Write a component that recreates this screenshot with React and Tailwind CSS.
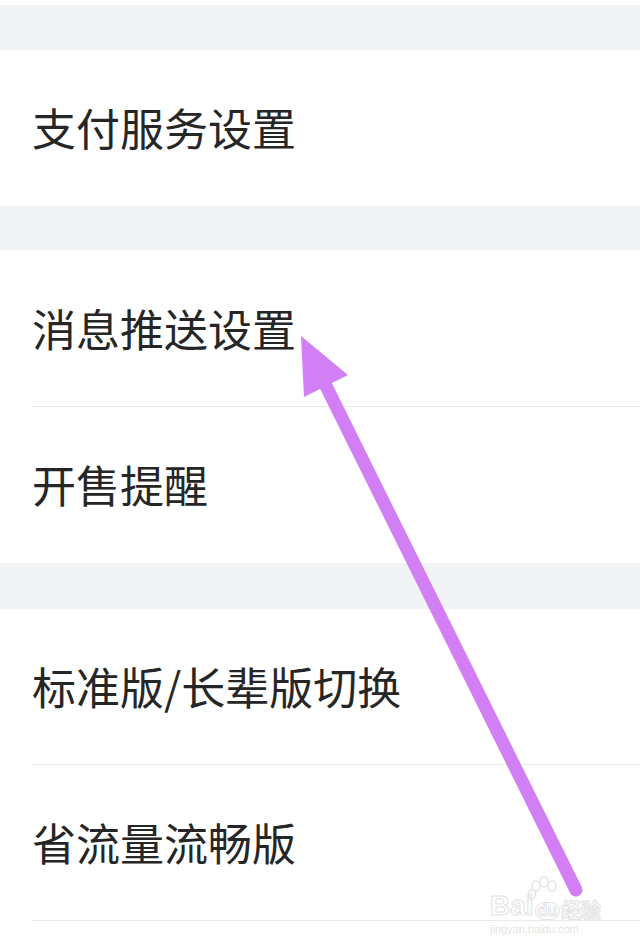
import React from "react";

const font = { fontFamily: '"Noto Sans CJK SC", "Noto Sans", sans-serif' };

function Row({ label, divider, tall }) {
  return (
    <div className={`relative ${tall ? "h-[157px]" : "h-[156px]"} flex items-center pl-[32px] bg-white`}>
      <span className="text-[44px] leading-none text-[#262626] -mt-[2px]">{label}</span>
      {divider && <div className="absolute bottom-0 left-[32px] right-0 h-px bg-[#ebebeb]" />}
    </div>
  );
}

export default function App() {
  return (
    <div className="relative w-[640px] h-[952px] overflow-hidden bg-white" style={font}>
      <div className="h-[5px] bg-white" />
      <div className="h-[45px] bg-[#f2f3f5]" />
      <Row label="支付服务设置" />
      <div className="h-[44px] bg-[#f2f3f5]" />
      <Row label="消息推送设置" divider tall />
      <Row label="开售提醒" />
      <div className="h-[46px] bg-[#f2f3f5]" />
      <Row label="标准版/长辈版切换" divider />
      <Row label="省流量流畅版" divider />
      <div className="h-[31px] bg-white" />

      {/* Baidu watermark */}
      <div className="absolute left-[490px] top-[876px] w-[120px] pointer-events-none">
        <svg width="40" height="30" viewBox="0 0 40 30" className="absolute left-[34px] top-[0px]">
          <g fill="none" stroke="#e6e6e6" strokeWidth="1.5">
            <ellipse cx="12" cy="10" rx="4" ry="5" />
            <ellipse cx="20" cy="6" rx="4" ry="5" />
            <ellipse cx="28" cy="10" rx="4" ry="5" />
            <ellipse cx="8" cy="18" rx="3.5" ry="4.5" />
          </g>
        </svg>
        <div className="flex items-end mt-[16px] text-[28px] leading-none font-bold" style={{ fontFamily: '"Liberation Sans", sans-serif', color: "#ffffff", WebkitTextStroke: "1px #e2e2e2" }}>
          <span>Bai</span>
          <span className="text-[16px] rounded-full border border-[#e2e2e2] px-[2px] mx-[1px]">du</span>
          <span className="text-[20px]" style={{ fontFamily: '"Noto Sans CJK SC", sans-serif' }}>经验</span>
        </div>
        <div className="text-[11px] leading-none mt-[4px] text-[#e4e4e4]" style={{ fontFamily: '"Liberation Sans", sans-serif' }}>jingyan.baidu.com</div>
      </div>

      {/* purple arrow overlay */}
      <svg className="absolute left-0 top-0 pointer-events-none" width="640" height="952" viewBox="0 0 640 952">
        <line x1="576" y1="890" x2="322" y2="378" stroke="#d27ff6" strokeWidth="13" strokeLinecap="round" />
        <polygon points="301,336 348,375 304,397" fill="#d27ff6" />
      </svg>
    </div>
  );
}
